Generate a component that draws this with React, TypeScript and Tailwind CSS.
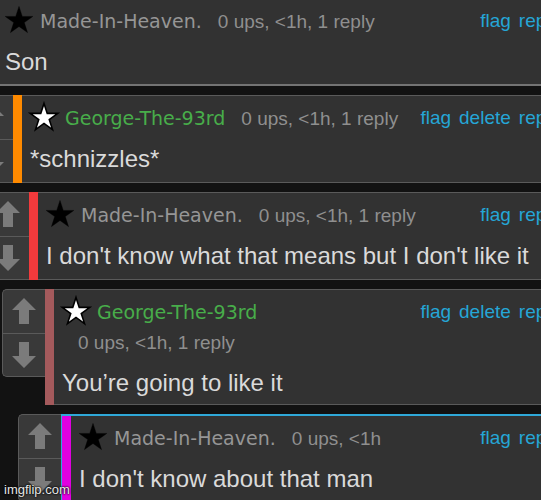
import React from "react";

type Comment = {
  user: string;
  self?: boolean;
  meta: string;
  actions: string[];
  body: string;
  indent: string;
  bar?: string;
  highlight?: boolean;
};

const comments: Comment[] = [
  {
    user: "Made-In-Heaven.",
    meta: "0 ups, <1h, 1 reply",
    actions: ["flag", "reply"],
    body: "Son",
    indent: "-ml-[46px] -mt-[2px]",
  },
  {
    user: "George-The-93rd",
    self: true,
    meta: "0 ups, <1h, 1 reply",
    actions: ["flag", "delete", "reply"],
    body: "*schnizzles*",
    indent: "-ml-[30px]",
    bar: "bg-[#ff8a00]",
  },
  {
    user: "Made-In-Heaven.",
    meta: "0 ups, <1h, 1 reply",
    actions: ["flag", "reply"],
    body: "I don't know what that means but I don't like it",
    indent: "-ml-[14px]",
    bar: "bg-[#f23a3c]",
  },
  {
    user: "George-The-93rd",
    self: true,
    meta: "0 ups, <1h, 1 reply",
    actions: ["flag", "delete", "reply"],
    body: "You\u2019re going to like it",
    indent: "ml-[2px]",
    bar: "bg-[#a45a5c]",
  },
  {
    user: "Made-In-Heaven.",
    meta: "0 ups, <1h",
    actions: ["flag", "reply"],
    body: "I don't know about that man",
    indent: "ml-[18px]",
    bar: "bg-[#e000e0]",
    highlight: true,
  },
];

// five-point star, the black one is the other user's, white is your own
function Star({ white }: { white?: boolean }) {
  return (
    <svg
      viewBox="0 0 28 27.2"
      overflow="visible"
      className="inline-block align-top w-[28px] h-[27px]"
    >
      <polygon
        points="14,0.4 17.28,10.49 27.89,10.49 19.31,16.72 22.58,26.81 14,20.58 5.42,26.81 8.69,16.72 0.11,10.49 10.72,10.49"
        fill={white ? "#ffffff" : "#000000"}
        stroke="#000000"
        strokeWidth={white ? 1.6 : 0.4}
      />
    </svg>
  );
}

function Arrow({ down }: { down?: boolean }) {
  return (
    <svg viewBox="0 0 24 26" className={"w-[24px] h-[26px] " + (down ? "rotate-180" : "")}>
      <polygon points="12,0 24,12 17,12 17,26 7,26 7,12 0,12" fill="#7b7b7b" />
    </svg>
  );
}

function VoteBox() {
  return (
    <div className="w-[43px] h-[88px] shrink-0 flex flex-col rounded-l-[5px] border border-r-0 border-[#5a5a5a] bg-[#393939]">
      <div className="flex-1 flex items-center justify-center border-b border-[#5a5a5a]">
        <Arrow />
      </div>
      <div className="flex-1 flex items-center justify-center">
        <Arrow down />
      </div>
    </div>
  );
}

function Row({ c, first }: { c: Comment; first?: boolean }) {
  const content = (
    <div
      className={
        "flex-1 bg-[#323232] px-[8px] pt-[7px] pb-[6px] " +
        (first ? "border-t border-b-2 border-t-[#5a5a5a] border-b-[#747474]" : c.highlight ? "" : "border-y border-[#5a5a5a]")
      }
    >
      <div className="leading-[30px] text-[19px] font-['Liberation_Sans',Arial,sans-serif]">
        <span className="float-right flex gap-[8px] text-[#25a6d6]">
          {c.actions.map((a) => (
            <span key={a}>{a}</span>
          ))}
        </span>
        <Star white={c.self} />
        <span
          className={
            "ml-[7px] text-[19px] font-['DejaVu_Sans',Verdana,sans-serif] " +
            (c.self ? "text-[#48ad4a]" : "text-[#969696]")
          }
        >
          {c.user}
        </span>
        <span className="inline-block whitespace-nowrap ml-[16px] text-[#8f8f8f]">{c.meta}</span>
      </div>
      <div className="mt-[10px] text-[24px] leading-[30px] text-[#dadada] font-['Liberation_Sans',Arial,sans-serif] whitespace-nowrap">
        {c.body}
      </div>
    </div>
  );

  return (
    <div className={"flex items-start " + c.indent}>
      <VoteBox />
      {c.highlight ? (
        <div className="flex flex-1 self-stretch border-t-2 border-l border-[#2fa8d8]">
          {c.bar && <div className={"w-[9px] shrink-0 " + c.bar} />}
          {content}
        </div>
      ) : (
        <div className="flex flex-1 self-stretch">
          {c.bar && <div className={"w-[9px] shrink-0 " + c.bar} />}
          {content}
        </div>
      )}
    </div>
  );
}

export default function App() {
  return (
    <div className="relative w-[541px] h-[500px] overflow-hidden bg-[#121212]">
      <div className="w-[568px] flex flex-col gap-[9px]">
        {comments.map((c, i) => (
          <Row key={i} c={c} first={i === 0} />
        ))}
      </div>
      <div className="absolute left-[4px] bottom-[3px] text-[13px] leading-[15px] text-[#e8e8e8] font-['Liberation_Sans',Arial,sans-serif] [text-shadow:0_0_2px_#000,0_0_2px_#000]">
        imgflip.com
      </div>
    </div>
  );
}
